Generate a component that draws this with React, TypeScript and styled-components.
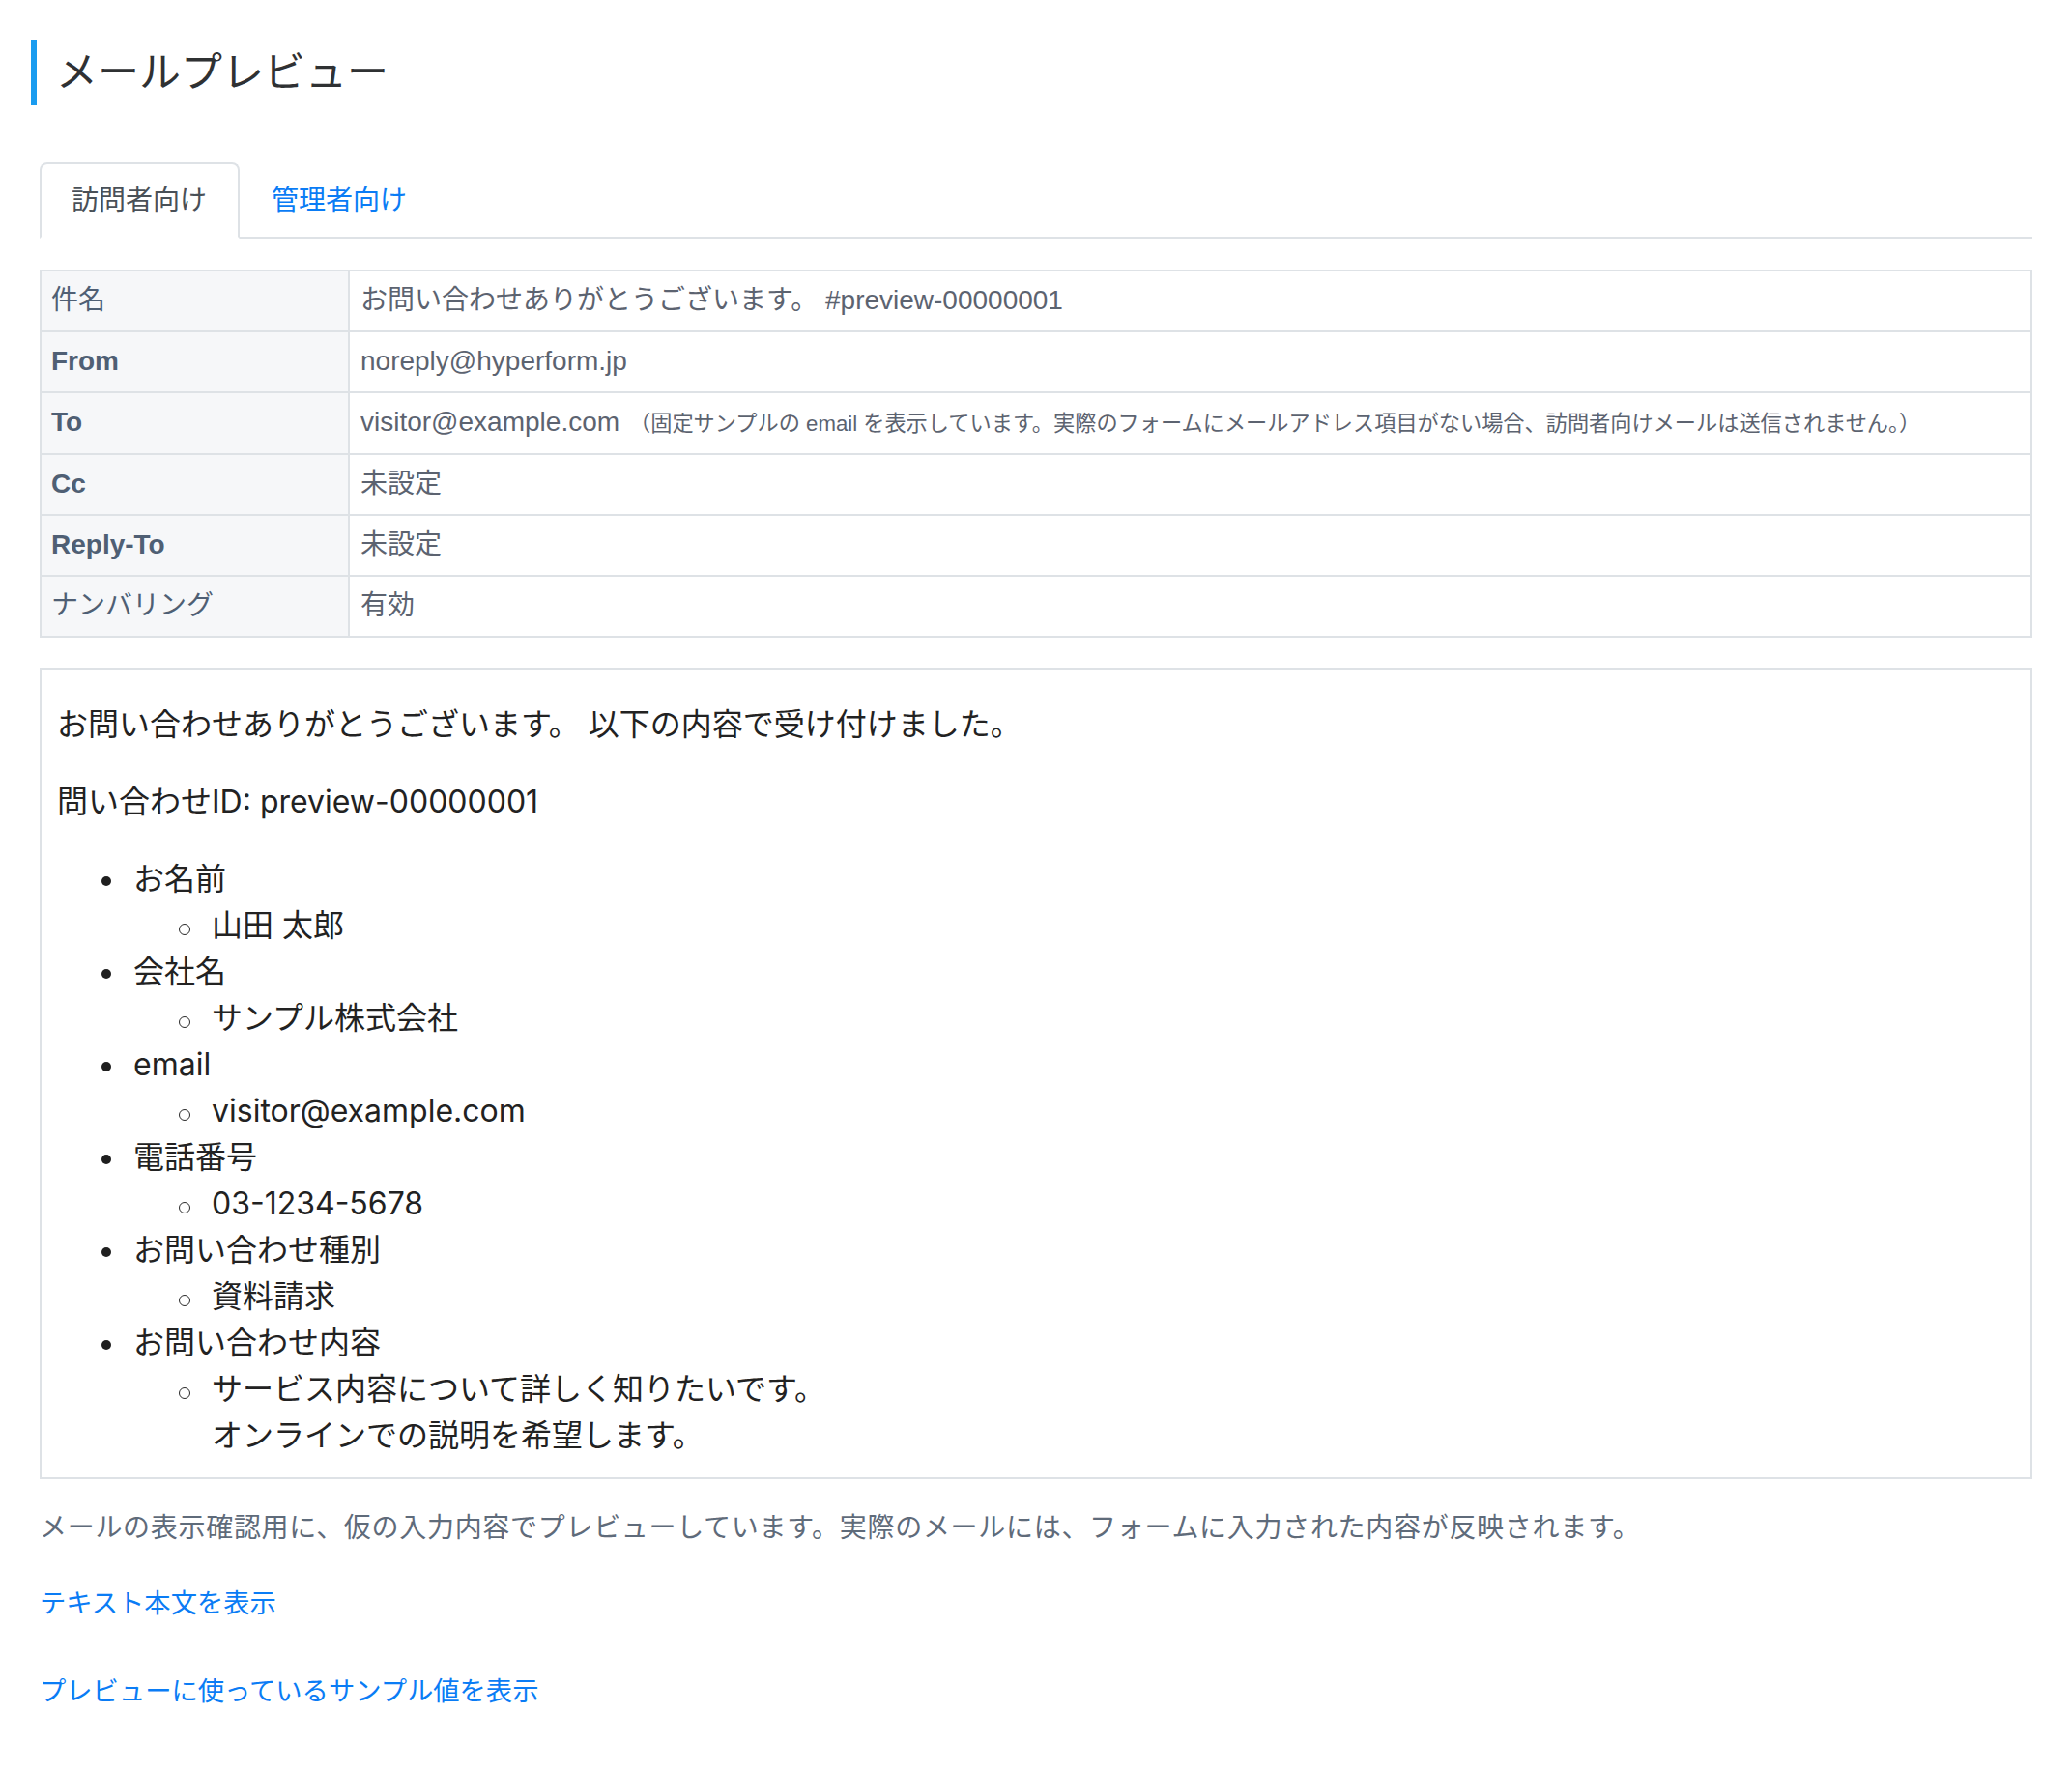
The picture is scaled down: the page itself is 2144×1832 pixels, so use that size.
import React from "react";
import styled, { createGlobalStyle } from "styled-components";

const GlobalStyle = createGlobalStyle`
  html, body {
    margin: 0;
    padding: 0;
    background: #ffffff;
  }
  body {
    font-family: "Liberation Sans", "Noto Sans CJK JP", sans-serif;
    color: #333333;
  }
  * { box-sizing: border-box; }
`;

const Page = styled.div`
  padding: 41px 41px 60px 41px;
  font-family: "Liberation Sans", "Noto Sans CJK JP", sans-serif;
`;

const Title = styled.h1`
  margin: 0 0 59px -9px;
  height: 68px;
  border-left: 6px solid #1a9cf0;
  padding-left: 20px;
  font-size: 43px;
  line-height: 68px;
  font-weight: 400;
  color: #2f3133;
`;

const TabNav = styled.div`
  display: flex;
  border-bottom: 2px solid #dee2e6;
  margin-bottom: 32px;
`;

const Tab = styled.button<{ $active?: boolean }>`
  appearance: none;
  background: ${(p) => (p.$active ? "#ffffff" : "transparent")};
  font-family: inherit;
  font-size: 28px;
  height: 79px;
  line-height: 75px;
  padding: 0 32px 0 31px;
  margin-bottom: -2px;
  cursor: pointer;
  border: 2px solid ${(p) => (p.$active ? "#dee2e6" : "transparent")};
  border-bottom-color: ${(p) => (p.$active ? "#ffffff" : "transparent")};
  border-radius: 8px 8px 0 0;
  color: ${(p) => (p.$active ? "#495057" : "#0a7cf5")};
`;

const HeaderTable = styled.table`
  width: 100%;
  border-collapse: collapse;
  border: 2px solid #dee2e6;
  margin-bottom: 31px;
  font-size: 28px;
`;

const Label = styled.th<{ $latin?: boolean }>`
  width: 319px;
  text-align: left;
  vertical-align: top;
  background: #f6f7f9;
  color: #4f5f74;
  font-weight: ${(p) => (p.$latin ? 700 : 400)};
  padding: 11px 10px;
  line-height: 38.8px;
  border: 2px solid #dee2e6;
`;

const Value = styled.td`
  color: #5c6370;
  padding: 11px 11px;
  line-height: 38.8px;
  vertical-align: top;
  border: 2px solid #dee2e6;
`;

const Note = styled.small`
  font-size: 22.2px;
  margin-left: 10px;
  color: #5c6370;
`;

const MailBox = styled.div`
  border: 2px solid #dee2e6;
  padding: 33px 16px 19px;
  font-family: "Inter", "Noto Sans CJK JP", sans-serif;
  font-size: 32px;
  line-height: 48px;
  color: #222222;
`;

const Para = styled.p`
  margin: 0 0 32px;
`;

const FieldList = styled.ul`
  margin: 0;
  padding-left: 79px;
  list-style: none;
`;

const FieldItem = styled.li`
  position: relative;
  &::before {
    content: "";
    position: absolute;
    left: -33px;
    top: 21px;
    width: 10px;
    height: 10px;
    border-radius: 50%;
    background: #1f1f1f;
  }
`;

const SubList = styled.ul`
  margin: 0;
  padding-left: 81px;
  list-style: none;
`;

const SubItem = styled.li`
  position: relative;
  &::before {
    content: "";
    position: absolute;
    left: -34px;
    top: 22px;
    width: 10px;
    height: 10px;
    border-radius: 50%;
    border: 1.8px solid #2a2a2a;
  }
`;

const Footnote = styled.p`
  margin: 30px 0 36px;
  font-size: 28px;
  letter-spacing: 0.7px;
  line-height: 42px;
  color: #5f6b7a;
`;

const ToggleLink = styled.a<{ $gap?: number }>`
  display: block;
  width: fit-content;
  font-size: 27.3px;
  line-height: 42px;
  color: #0a7cf5;
  text-decoration: none;
  cursor: pointer;
  margin-bottom: ${(p) => p.$gap ?? 0}px;
`;

type Row = { label: string; latin?: boolean; value: React.ReactNode };

const rows: Row[] = [
  { label: "件名", value: "お問い合わせありがとうございます。 #preview-00000001" },
  { label: "From", latin: true, value: "noreply@hyperform.jp" },
  {
    label: "To",
    latin: true,
    value: (
      <>
        visitor@example.com
        <Note>
          （固定サンプルの email を表示しています。実際のフォームにメールアドレス項目がない場合、訪問者向けメールは送信されません。）
        </Note>
      </>
    ),
  },
  { label: "Cc", latin: true, value: "未設定" },
  { label: "Reply-To", latin: true, value: "未設定" },
  { label: "ナンバリング", value: "有効" },
];

const fields: { name: string; lines: string[] }[] = [
  { name: "お名前", lines: ["山田 太郎"] },
  { name: "会社名", lines: ["サンプル株式会社"] },
  { name: "email", lines: ["visitor@example.com"] },
  { name: "電話番号", lines: ["03-1234-5678"] },
  { name: "お問い合わせ種別", lines: ["資料請求"] },
  {
    name: "お問い合わせ内容",
    lines: ["サービス内容について詳しく知りたいです。", "オンラインでの説明を希望します。"],
  },
];

export default function App() {
  return (
    <>
      <GlobalStyle />
      <Page>
        <Title>メールプレビュー</Title>
        <TabNav>
          <Tab $active>訪問者向け</Tab>
          <Tab>管理者向け</Tab>
        </TabNav>
        <HeaderTable>
          <tbody>
            {rows.map((r) => (
              <tr key={r.label}>
                <Label $latin={r.latin}>{r.label}</Label>
                <Value>{r.value}</Value>
              </tr>
            ))}
          </tbody>
        </HeaderTable>
        <MailBox>
          <Para>お問い合わせありがとうございます。 以下の内容で受け付けました。</Para>
          <Para>問い合わせID: preview-00000001</Para>
          <FieldList>
            {fields.map((f) => (
              <FieldItem key={f.name}>
                {f.name}
                <SubList>
                  <SubItem>
                    {f.lines.map((l, i) => (
                      <React.Fragment key={i}>
                        {i > 0 && <br />}
                        {l}
                      </React.Fragment>
                    ))}
                  </SubItem>
                </SubList>
              </FieldItem>
            ))}
          </FieldList>
        </MailBox>
        <Footnote>
          メールの表示確認用に、仮の入力内容でプレビューしています。実際のメールには、フォームに入力された内容が反映されます。
        </Footnote>
        <ToggleLink $gap={49}>テキスト本文を表示</ToggleLink>
        <ToggleLink>プレビューに使っているサンプル値を表示</ToggleLink>
      </Page>
    </>
  );
}
